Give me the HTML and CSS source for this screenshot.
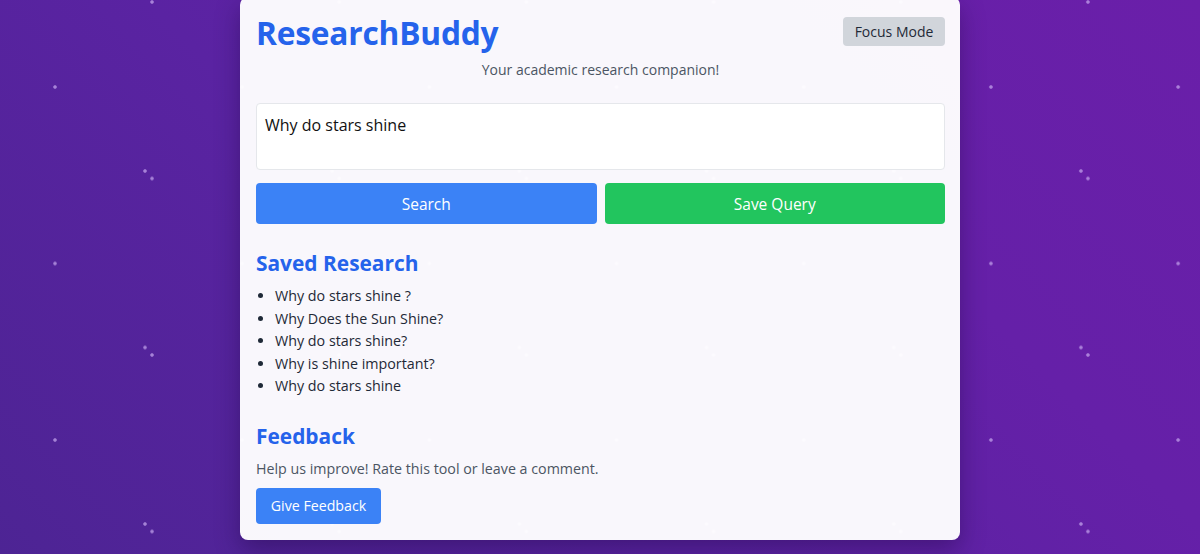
FILE: index.html
```html
<!DOCTYPE html>
<html lang="en">
<head>
<meta charset="utf-8">
<title>ResearchBuddy</title>
<link rel="stylesheet" href="styles.css">
</head>
<body>
<main class="card">
  <header class="header">
    <h1 class="title">ResearchBuddy</h1>
    <button class="btn btn-focus">Focus Mode</button>
  </header>
  <p class="subtitle">Your academic research companion!</p>
  <textarea class="query">Why do stars shine</textarea>
  <div class="actions">
    <button class="btn btn-blue btn-wide">Search</button>
    <button class="btn btn-green btn-wide">Save Query</button>
  </div>
  <h2 class="section-title">Saved Research</h2>
  <ul class="saved-list">
    <li>Why do stars shine ?</li>
    <li>Why Does the Sun Shine?</li>
    <li>Why do stars shine?</li>
    <li>Why is shine important?</li>
    <li>Why do stars shine</li>
  </ul>
  <h2 class="section-title section-feedback">Feedback</h2>
  <p class="feedback-text">Help us improve! Rate this tool or leave a comment.</p>
  <button class="btn btn-blue btn-feedback">Give Feedback</button>
</main>
</body>
</html>
```
FILE: styles.css
```css
* { box-sizing: border-box; }

html, body { height: 100%; }

body {
  margin: 0;
  overflow: hidden;
  font-family: "Open Sans", "Noto Sans", sans-serif;
  display: flex;
  justify-content: center;
  align-items: flex-start;
  background-color: #5e22a3;
  background-image:
    radial-gradient(circle at 2px 2px, rgba(200, 170, 240, 0.7) 1.3px, transparent 2.2px),
    radial-gradient(circle at 2px 2px, rgba(200, 170, 240, 0.7) 1.3px, transparent 2.2px),
    radial-gradient(circle at 2px 2px, rgba(200, 170, 240, 0.7) 1.3px, transparent 2.2px),
    linear-gradient(45deg, #4d2494 0%, #5a23a2 40%, #6520a8 70%, #6a1fa9 100%);
  background-size: 187.2px 176.5px, 187.2px 176.5px, 187.2px 176.5px, 100% 100%;
  background-position: 53px 85px, 143px 169px, 150px 0px, 0 0;
}

.card {
  width: 720px;
  margin-top: -3px;
  padding: 16px 15px 16px 16px;
  background: rgba(255, 255, 255, 0.965);
  border-radius: 8px;
  box-shadow: 0 10px 25px rgba(20, 0, 50, 0.35);
  display: flex;
  flex-direction: column;
  align-items: stretch;
}

.header {
  display: flex;
  justify-content: space-between;
  align-items: flex-start;
}

.title {
  margin: 0;
  font-size: 31.7px;
  line-height: 40px;
  font-weight: 700;
  color: #2563eb;
  letter-spacing: -0.2px;
}

.btn {
  font-family: inherit;
  border: none;
  border-radius: 4px;
  cursor: pointer;
  color: #fff;
}

.btn-focus {
  margin-top: 4px;
  height: 29px;
  width: 102px;
  padding: 0;
  background: #d1d5db;
  color: #1f2937;
  font-size: 14px;
}

.subtitle {
  margin: 6px 0 0;
  text-align: center;
  font-size: 14px;
  line-height: 22px;
  color: #4b5563;
}

.query {
  margin-top: 22px;
  height: 67px;
  width: 100%;
  resize: none;
  border: 1px solid #e5e7eb;
  border-radius: 4px;
  background: #fff;
  padding: 9px 8px;
  font-family: inherit;
  font-size: 16px;
  line-height: 24px;
  color: #111;
}

.actions {
  margin-top: 13px;
  display: flex;
  gap: 8px;
}

.btn-wide {
  flex: 1;
  height: 41px;
  font-size: 15.5px;
}

.btn-blue { background: #3b82f6; }
.btn-green { background: #22c55e; }

.section-title {
  margin: 25px 0 0;
  font-size: 20.9px;
  line-height: 28px;
  font-weight: 700;
  color: #2563eb;
}

.saved-list {
  margin: 8px 0 0;
  padding-left: 19px;
  font-size: 14.3px;
  line-height: 22.5px;
  color: #1f2937;
}

.section-feedback { margin-top: 24px; }

.feedback-text {
  margin: 8px 0 0;
  font-size: 14.25px;
  line-height: 22px;
  color: #4b5563;
}

.btn-feedback {
  margin-top: 8px;
  align-self: flex-start;
  height: 36px;
  width: 125px;
  padding: 0;
  font-size: 14.2px;
}
```
